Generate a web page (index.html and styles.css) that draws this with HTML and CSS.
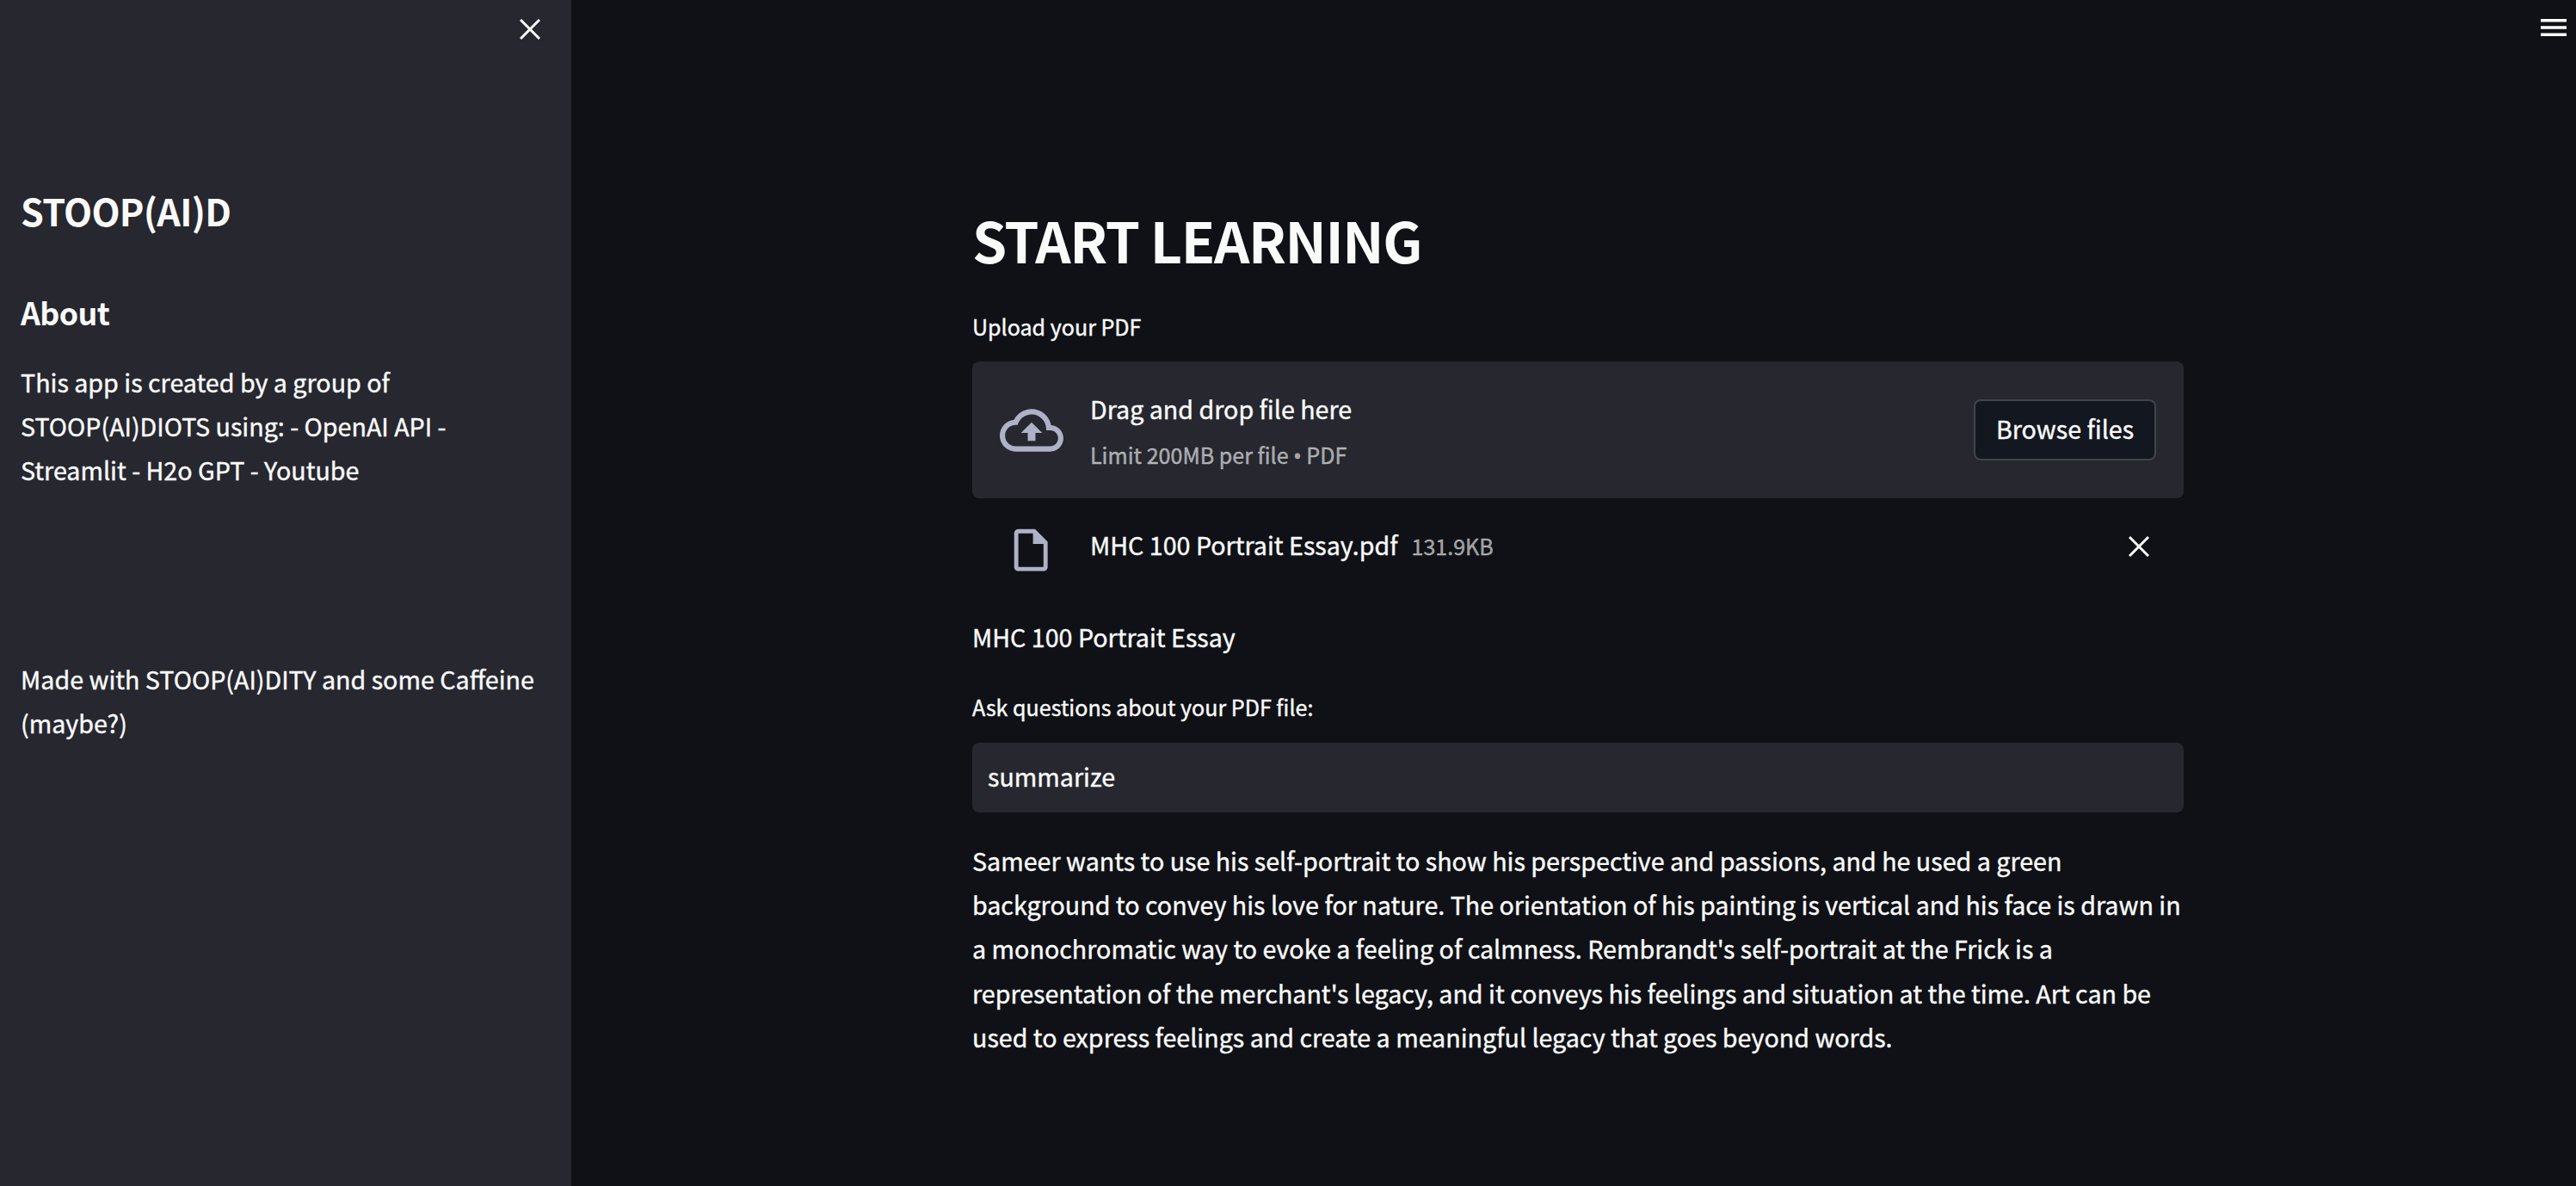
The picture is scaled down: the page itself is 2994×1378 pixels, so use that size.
FILE: index.html
```html
<!DOCTYPE html>
<html lang="en">
<head>
    <meta charset="UTF-8">
    <meta name="viewport" content="width=device-width, initial-scale=1.0">
    <title>STOOP(AI)D</title>
    <link rel="stylesheet" href="styles.css">
</head>
<body>
    <aside class="sidebar">
        <button class="icon-btn sidebar-close" aria-label="Close sidebar">
            <svg class="icon-x" viewBox="0 0 24 24"><path d="M1 1L23 23M23 1L1 23"/></svg>
        </button>
        <h2 class="brand">STOOP(AI)D</h2>
        <h3 class="about">About</h3>
        <p class="text">This app is created by a group of<br>STOOP(AI)DIOTS using: - OpenAI API -<br>Streamlit - H2o GPT - Youtube</p>
        <p class="text made">Made with STOOP(AI)DITY and some Caffeine<br>(maybe?)</p>
    </aside>
    <main class="main">
        <header class="toolbar">
            <button class="icon-btn menu" aria-label="Menu">
                <svg width="30" height="20" viewBox="0 0 30 20"><path d="M0 0h30v3.6H0zM0 8.2h30v3.6H0zM0 16.4h30V20H0z" fill="#fff"/></svg>
            </button>
        </header>
        <div class="content">
            <h1 class="title">START LEARNING</h1>
            <p class="label">Upload your PDF</p>
            <section class="dropzone">
                <svg class="cloud" viewBox="0 0 24 24"><path d="M19.35 10.04C18.67 6.59 15.64 4 12 4 9.11 4 6.6 5.64 5.35 8.04 2.34 8.36 0 10.91 0 14c0 3.31 2.69 6 6 6h13c2.76 0 5-2.24 5-5 0-2.64-2.05-4.78-4.65-4.96zM19 18H6c-2.21 0-4-1.79-4-4s1.79-4 4-4h.71C7.37 7.69 9.48 6 12 6c3.04 0 5.5 2.46 5.5 5.5v.5H19c1.66 0 3 1.34 3 3s-1.34 3-3 3zM8 13h2.55v3h2.9v-3H16l-4-4z"/></svg>
                <div class="drop-text">
                    <span class="text">Drag and drop file here</span>
                    <span class="small">Limit 200MB per file <span class="dot">•</span> PDF</span>
                </div>
                <button class="browse">Browse files</button>
            </section>
            <div class="file">
                <svg class="file-icon" viewBox="0 0 24 24"><path d="M14 2H6c-1.1 0-1.99.9-1.99 2L4 20c0 1.1.89 2 1.99 2H18c1.1 0 2-.9 2-2V8l-6-6zM6 20V4h7v5h5v11H6z"/></svg>
                <span class="text file-name">MHC 100 Portrait Essay.pdf</span>
                <span class="small">131.9KB</span>
                <button class="icon-btn file-remove" aria-label="Remove file">
                    <svg class="icon-x" viewBox="0 0 24 24"><path d="M1 1L23 23M23 1L1 23"/></svg>
                </button>
            </div>
            <p class="text doc-name">MHC 100 Portrait Essay</p>
            <label class="label question-label" for="question">Ask questions about your PDF file:</label>
            <input class="question" id="question" type="text" value="summarize">
            <p class="text answer">Sameer wants to use his self-portrait to show his perspective and passions, and he used a green<br>background to convey his love for nature. The orientation of his painting is vertical and his face is drawn in<br>a monochromatic way to evoke a feeling of calmness. Rembrandt's self-portrait at the Frick is a<br>representation of the merchant's legacy, and it conveys his feelings and situation at the time. Art can be<br>used to express feelings and create a meaningful legacy that goes beyond words.</p>
        </div>
    </main>
</body>
</html>
```
FILE: styles.css
```css
* {
    box-sizing: border-box;
    margin: 0;
    padding: 0;
}
body {
    display: flex;
    height: 100vh;
    overflow: hidden;
    background-color: #0f1116;
    color: #fafafa;
    font-family: "Noto Sans CJK SC", "Noto Sans", sans-serif;
    font-size: 28.65px;
    line-height: 51.2px;
    -webkit-text-stroke: 0.4px;
}
.text, .label, .small {
    display: block;
    white-space: nowrap;
}
.icon-btn {
    display: flex;
    border: none;
    background: none;
    cursor: pointer;
}
.icon-x {
    width: 24px;
    height: 24px;
    fill: none;
    stroke: #fafafa;
    stroke-width: 3;
}

/* sidebar */
.sidebar {
    flex: none;
    width: 664px;
    padding: 22px 24px;
    background-color: #26272f;
}
.sidebar-close {
    margin-left: auto;
    margin-right: 12px;
}
.brand, .about, .title {
    -webkit-text-stroke: 0;
}
.brand {
    margin-top: 169px;
    font-size: 43px;
    line-height: 58px;
    letter-spacing: -0.7px;
}
.about {
    margin-top: 65px;
    font-size: 35.8px;
    line-height: 48px;
    letter-spacing: -0.6px;
}
.about + .text {
    margin-top: 32px;
}
.made {
    margin-top: 191px;
}

/* main */
.main {
    flex: 1;
    display: flex;
    flex-direction: column;
}
.toolbar {
    display: flex;
    justify-content: flex-end;
    height: 92px;
    padding: 22px 11px;
}
.content {
    width: 1408px;
    margin-left: 466px;
    padding-top: 143px;
}
.title {
    font-size: 64.5px;
    line-height: 86px;
    letter-spacing: -1.4px;
}
.label {
    font-size: 25.07px;
    line-height: 45px;
    margin-top: 36px;
}
.small {
    font-size: 25.07px;
    color: rgba(250, 250, 250, 0.6);
}
.dot {
    font-family: "Noto Sans", sans-serif;
}
.dropzone {
    display: flex;
    align-items: center;
    height: 159px;
    margin-top: 18px;
    padding: 0 32px;
    border-radius: 8px;
    background-color: #26272f;
}
.cloud {
    width: 74px;
    height: 74px;
    fill: #afb2c6;
    margin-right: 31px;
}
.drop-text {
    padding-top: 5px;
}
.drop-text .small {
    margin-top: 2px;
}
.browse {
    width: 212px;
    height: 71px;
    margin-left: auto;
    padding-bottom: 4px;
    border: 2px solid rgba(250, 250, 250, 0.2);
    border-radius: 8px;
    background-color: #131720;
    color: #fafafa;
    font: inherit;
    line-height: 51.2px;
}
.file {
    display: flex;
    align-items: center;
    height: 74px;
    margin-top: 17px;
    padding: 0 40px 0 39px;
}
.file-icon {
    width: 58.4px;
    height: 58.4px;
    fill: #afb2c6;
    margin-top: 12px;
    margin-right: 39.6px;
}
.file-name {
    margin-right: 16px;
}
.file .small {
    margin-top: 3px;
}
.file-remove {
    margin-top: 4px;
    margin-left: auto;
}
.doc-name {
    margin-top: 44px;
}
.question-label {
    margin-top: 34px;
}
.question {
    display: block;
    width: 100%;
    height: 81px;
    margin-top: 18.8px;
    padding: 0 18px 4px;
    border: none;
    outline: none;
    border-radius: 8px;
    background-color: #26272f;
    color: #fafafa;
    font: inherit;
}
.answer {
    margin-top: 30px;
}
```
